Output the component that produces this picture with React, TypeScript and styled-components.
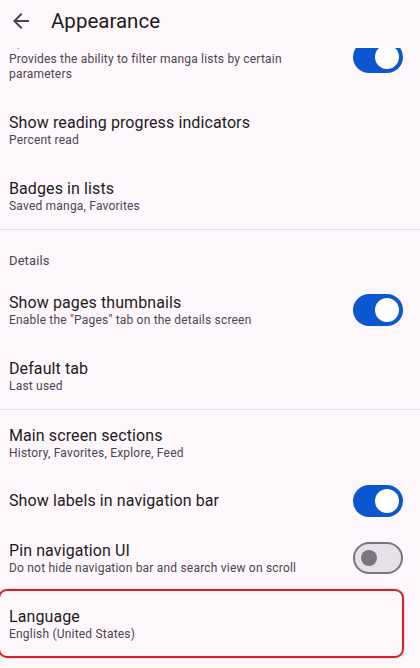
import { FC } from 'react';
import styled, { createGlobalStyle, css } from 'styled-components';

const GlobalStyle = createGlobalStyle`
  body {
    margin: 0;
    background: #fdf7fc;
    font-family: Roboto, 'Liberation Sans', sans-serif;
    -webkit-font-smoothing: antialiased;
  }
`;

const Screen = styled.div`
  width: 420px;
  height: 668px;
  overflow: hidden;
  display: flex;
  flex-direction: column;
  background: #fdf7fc;
`;

const TopBar = styled.header`
  height: 48px;
  flex-shrink: 0;
  display: flex;
  align-items: center;
  padding: 0 0 6px 9px;
  box-sizing: border-box;
  background: #fdf7fc;
  position: relative;
  z-index: 1;
`;

const BackButton = styled.button`
  width: 24px;
  height: 24px;
  padding: 0;
  border: none;
  background: none;
  color: #49454f;
  display: flex;
  align-items: center;
  justify-content: center;
`;

const ScreenTitle = styled.h1`
  margin: 0 0 0 18px;
  font-size: 20.5px;
  font-weight: 400;
  color: #1d1b20;
`;

// the list is scrolled a little: the first preference slides under the bar
const Scroller = styled.div`
  flex: 1;
  overflow: hidden;
`;

const ScrollContent = styled.div`
  margin-top: -32px;
`;

const Row = styled.div<{ $highlighted?: boolean; $single?: boolean }>`
  position: relative;
  display: flex;
  align-items: center;
  gap: 40px;
  padding: ${(p) => (p.$single ? '8.5px' : '15px')} 17px
    ${(p) => (p.$single ? '8.5px' : '15px')} 9px;

  ${(p) =>
    p.$highlighted &&
    css`
      &::after {
        content: '';
        position: absolute;
        top: -2px;
        bottom: -1px;
        left: -2px;
        right: 16px;
        border: 2px solid #d0232a;
        border-radius: 9px;
        box-shadow: 0 0 2px rgba(208, 35, 42, 0.35);
      }
    `}
`;

const TextBlock = styled.div`
  flex: 1;
  min-width: 0;
`;

const Title = styled.div`
  font-size: 16px;
  line-height: 21px;
  color: #1d1b20;
  letter-spacing: 0.1px;
`;

const Summary = styled.div`
  font-size: 12px;
  line-height: 15px;
  color: #49454f;
  letter-spacing: 0.2px;
`;

const Divider = styled.div`
  height: 1px;
  background: #e6e0e6;
`;

const Category = styled.div`
  padding: 23px 9px 8px;
  font-size: 13px;
  line-height: 16px;
  color: #49454f;
  letter-spacing: 0.1px;
`;

const Track = styled.div<{ $on: boolean }>`
  width: 50px;
  height: 32px;
  box-sizing: border-box;
  border-radius: 16px;
  flex-shrink: 0;
  display: flex;
  align-items: center;
  ${(p) =>
    p.$on
      ? css`
          background: #0b57d0;
          justify-content: flex-end;
          padding-right: 4px;
        `
      : css`
          background: #e6e0e9;
          border: 2px solid #79747e;
          padding-left: 6px;
        `}
`;

const Thumb = styled.div<{ $on: boolean }>`
  border-radius: 50%;
  ${(p) =>
    p.$on
      ? css`
          width: 24px;
          height: 24px;
          background: #ffffff;
        `
      : css`
          width: 16px;
          height: 16px;
          background: #79747e;
        `}
`;

const Switch: FC<{ on: boolean }> = ({ on }) => (
  <Track $on={on}>
    <Thumb $on={on} />
  </Track>
);

type Pref = {
  title: string;
  summary?: string;
  toggle?: boolean;
  highlighted?: boolean;
};

const PrefRow: FC<Pref> = ({ title, summary, toggle, highlighted }) => (
  <Row $highlighted={highlighted} $single={!summary}>
    <TextBlock>
      <Title>{title}</Title>
      {summary && <Summary>{summary}</Summary>}
    </TextBlock>
    {toggle !== undefined && <Switch on={toggle} />}
  </Row>
);

const App: FC = () => (
  <>
    <GlobalStyle />
    <Screen>
      <TopBar>
        <BackButton aria-label="Back">
          <svg width="24" height="24" viewBox="0 0 24 24" fill="currentColor">
            <path d="M20 11H7.83l5.59-5.59L12 4l-8 8 8 8 1.41-1.41L7.83 13H20v-2z" />
          </svg>
        </BackButton>
        <ScreenTitle>Appearance</ScreenTitle>
      </TopBar>
      <Scroller>
        <ScrollContent>
          <PrefRow
            title="Quick filter"
            summary="Provides the ability to filter manga lists by certain parameters"
            toggle
          />
          <PrefRow title="Show reading progress indicators" summary="Percent read" />
          <PrefRow title="Badges in lists" summary="Saved manga, Favorites" />
          <Divider />
          <Category>Details</Category>
          <PrefRow
            title="Show pages thumbnails"
            summary={'Enable the "Pages" tab on the details screen'}
            toggle
          />
          <PrefRow title="Default tab" summary="Last used" />
          <Divider />
          <PrefRow
            title="Main screen sections"
            summary="History, Favorites, Explore, Feed"
          />
          <PrefRow title="Show labels in navigation bar" toggle />
          <PrefRow
            title="Pin navigation UI"
            summary="Do not hide navigation bar and search view on scroll"
            toggle={false}
          />
          <PrefRow title="Language" summary="English (United States)" highlighted />
        </ScrollContent>
      </Scroller>
    </Screen>
  </>
);

export default App;
